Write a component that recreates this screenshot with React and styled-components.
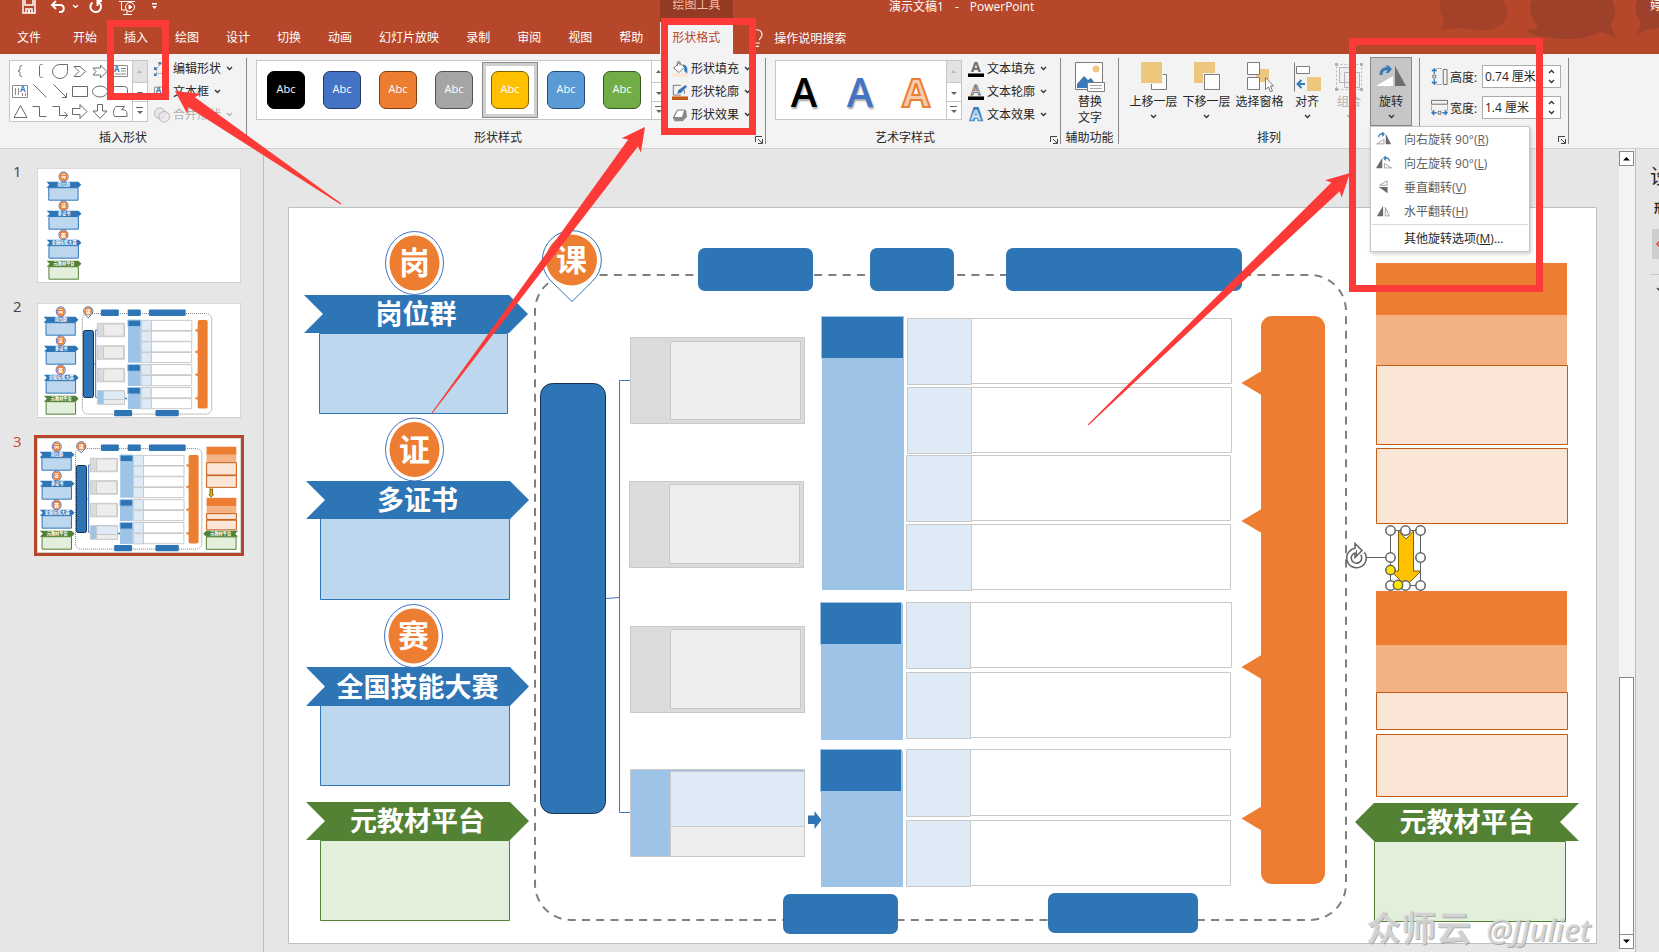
import React from "react";
import styled, { createGlobalStyle, css } from "styled-components";
import { Lightbulb } from "lucide-react";

const c = {
  brand: "#b7472a",
  brandDark: "#943a22",
  panel: "#f3f3f3",
  canvas: "#e6e6e6",
  line: "#c6c6c6",
  rule: "#8a8886",
  text: "#262626",
  muted: "#606060",
  faint: "#b1b1b1",
  icon: "#6a6a6a",
  iconBlue: "#3b7ab8",
  sand: "#eec77f",
  blue: "#2e75b6",
  orange: "#ed7d31",
  green: "#548235",
  mark: "#fc3a37",
};

const Global = createGlobalStyle`
  *, *::before, *::after { box-sizing: border-box; }
  body { margin: 0; background: ${c.canvas}; }
  body, button, input {
    font-family: "Open Sans", "Noto Sans CJK SC", sans-serif;
    font-size: 12px;
    color: ${c.text};
  }
  button { border: 0; padding: 0; background: none; }
  svg { display: block; flex: none; }
`;

const Page = styled.div`
  position: relative;
  display: flex;
  flex-direction: column;
  min-height: 100vh;
  overflow: hidden;
`;

/* ---------- header ---------- */

const Header = styled.header`
  position: relative;
  background: ${c.brand};
  color: #fff;
`;

const Ornament = styled.svg`
  position: absolute;
  top: 0;
  right: 0;
`;

const TitleBar = styled.div`
  position: relative;
  display: flex;
  height: 22px;
  overflow: hidden;
`;

const QuickAccess = styled.div`
  display: flex;
  align-items: flex-start;
  flex: 0 0 660px;
  padding-left: 14px;
`;

const QuickButton = styled.button`
  display: flex;
  justify-content: center;
  width: ${(p) => p.$w}px;
`;

const ContextLabel = styled.div`
  flex: 0 0 73px;
  background: ${c.brandDark};
  color: #f3bda9;
  text-align: center;
  line-height: 10px;
`;

const DocTitle = styled.h1`
  display: flex;
  flex: 1;
  gap: 11px;
  margin: 0 0 0 156px;
  font-size: 12px;
  font-weight: 400;
  line-height: 14px;
  white-space: nowrap;
`;

const UserName = styled.div`
  flex: 0 0 9px;
  overflow: hidden;
  line-height: 12px;
  white-space: nowrap;
`;

const TabRow = styled.nav`
  position: relative;
  display: flex;
  height: 32px;
`;

const Tab = styled.button`
  padding: 0 13px;
  margin-right: 1px;
  color: #fff;
  line-height: 32px;
  white-space: nowrap;
  ${(p) => p.$file && css`padding: 0 18px 0 17px;`}
  ${(p) =>
    p.$active &&
    css`
      margin: 0 0 0 3px;
      padding: 0 13px 0 12px;
      color: ${c.brand};
      background: ${c.panel};
    `}
`;

const TellMe = styled.button`
  display: flex;
  align-items: center;
  gap: 7px;
  margin-left: 14px;
  color: #fff;
`;

/* ---------- ribbon ---------- */

const Ribbon = styled.section`
  display: flex;
  height: 95px;
  background: ${c.panel};
  border-bottom: 1px solid #d0d0d0;
`;

const GroupBox = styled.div`
  display: flex;
  flex-direction: column;
  flex: 0 0 ${(p) => p.$w}px;
`;

const GroupBody = styled.div`
  display: flex;
  flex: 1;
  align-items: flex-start;
  padding: ${(p) => p.$pad || "6px 0 0 9px"};
`;

const GroupFoot = styled.div`
  display: flex;
  align-items: center;
  height: 20px;
`;

const GroupName = styled.span`
  flex: 1;
  text-align: center;
  line-height: 20px;
  white-space: nowrap;
`;

const Launcher = styled.button`
  display: flex;
  justify-content: flex-end;
  width: 16px;
  padding: 4px 1px 0 0;
`;

const Separator = styled.div`
  flex: 0 0 1px;
  margin: 4px 0;
  background: ${c.rule};
`;

const Gallery = styled.div`
  display: flex;
  height: ${(p) => p.$h || 60}px;
  background: #fff;
  border: 1px solid ${c.line};
`;

const ShapeGrid = styled.div`
  display: grid;
  grid-template-columns: repeat(6, 20px);
  grid-auto-rows: 20px;
  width: 122px;
`;

const ShapeButton = styled.button`
  display: grid;
  place-items: center;
`;

const ScrollColumn = styled.div`
  display: grid;
  grid-template-rows: 21px 19px 1fr;
  width: 15px;
  border-left: 1px solid ${c.line};
`;

const ScrollCell = styled.button`
  display: grid;
  place-items: center;
  background: ${(p) => (p.disabled ? "#e3e3e3" : "#fff")};
  & + & { border-top: 1px solid ${c.line}; }
`;

const Commands = styled.div`
  display: grid;
  grid-auto-rows: 23px;
  margin: ${(p) => p.$m || "-3px 0 0 6px"};
`;

const Command = styled.button`
  display: flex;
  align-items: center;
  gap: ${(p) => p.$gap || 5}px;
  line-height: 23px;
  white-space: nowrap;
  color: ${(p) => (p.disabled ? c.faint : c.text)};
`;

const CommandIcon = styled.span`
  width: 14px;
`;

const StyleList = styled.div`
  display: flex;
  align-items: center;
  width: 394px;
  padding-left: 1px;
`;

const StyleTile = styled.button`
  display: grid;
  place-items: center;
  width: 56px;
  height: 56px;
  ${(p) =>
    p.$selected &&
    css`
      border: 1px solid #8a8a8a;
      box-shadow: inset 0 0 0 3px #cfcfcf;
    `}
`;

const StyleChip = styled.span`
  width: 38px;
  height: 38px;
  border: 1px solid ${(p) => p.$edge};
  border-radius: 7px;
  background: ${(p) => p.$fill};
  color: #fff;
  font-size: 11px;
  line-height: 33px;
`;

const WordArtList = styled.div`
  display: flex;
  width: 170px;
`;

const WordArt = styled.button`
  width: 56px;
  font-size: 40px;
  font-weight: 600;
  line-height: 62px;
  color: ${(p) => p.$fill};
  text-shadow: 1px 2px 2px rgba(0, 0, 0, 0.35);
  ${(p) =>
    p.$outline &&
    css`
      font-weight: 700;
      -webkit-text-stroke: 2px ${p.$outline};
      text-shadow: none;
    `}
`;

const BigButton = styled.button`
  display: flex;
  flex-direction: column;
  align-items: center;
  width: ${(p) => p.$w}px;
  height: 69px;
  padding-top: 4px;
  border: 1px solid transparent;
  line-height: 16px;
  white-space: pre-line;
  color: ${(p) => (p.disabled ? c.faint : c.text)};
  ${(p) =>
    p.$open &&
    css`
      background: #c6c6c6;
      border-color: #8a8a8a;
    `}
`;

const BigName = styled.span`
  margin: 2px -4px 4px;
`;

const MenuAnchor = styled.div`
  position: relative;
`;

const Menu = styled.div`
  position: absolute;
  z-index: 3;
  top: 69px;
  left: 0;
  width: 160px;
  padding: 0 1px 1px;
  background: #fff;
  border: 1px solid ${c.line};
  box-shadow: 1px 2px 4px rgba(0, 0, 0, 0.2);
`;

const MenuItem = styled.button`
  display: grid;
  grid-template-columns: 28px 1fr;
  align-items: center;
  width: 100%;
  height: 24px;
  padding-left: 4px;
  text-align: left;
  white-space: nowrap;
  color: ${(p) => (p.$strong ? c.text : c.muted)};
`;

const MenuRule = styled.hr`
  height: 1px;
  margin: 1px 0;
  border: 0;
  background: #d9d9d9;
`;

const SizeRows = styled.div`
  display: grid;
  gap: 8px;
`;

const SizeRow = styled.div`
  display: flex;
  align-items: center;
  height: 23px;
`;

const SizeLabel = styled.label`
  width: 32px;
  margin-left: 2px;
  white-space: nowrap;
`;

const Spinner = styled.div`
  display: flex;
  width: 79px;
  height: 23px;
  background: #fff;
  border: 1px solid #ababab;
`;

const SpinInput = styled.input`
  width: 60px;
  padding: 0 2px 2px;
  border: 0;
  outline: 0;
  background: none;
`;

const SpinButtons = styled.div`
  display: grid;
  flex: 1;
`;

const SpinButton = styled.button`
  display: grid;
  place-items: center;
`;

/* ---------- workspace ---------- */

const Workspace = styled.main`
  display: flex;
  flex: 1;
  background: ${c.canvas};
`;

const SlidePane = styled.aside`
  display: flex;
  flex-direction: column;
  gap: 13px;
  flex: 0 0 264px;
  padding: 12px 22px 0 13px;
  border-right: 1px solid #bdbdbd;
`;

const ThumbRow = styled.button`
  display: flex;
  align-items: flex-start;
  text-align: left;
`;

const ThumbNumber = styled.span`
  flex: 0 0 24px;
  font-size: 15px;
  line-height: 20px;
  color: ${(p) => (p.$on ? "#c8472b" : "#444")};
`;

const ThumbFrame = styled.span`
  flex: 1;
  margin-top: 7px;
  outline: ${(p) => (p.$on ? `3px solid ${c.brand}` : "0")};
`;

const Editor = styled.section`
  flex: 1;
  min-width: 0;
  padding: 58px 22px 8px 24px;
`;

const SlideSvg = styled.svg`
  width: 100%;
  height: auto;
  font-family: "Noto Sans CJK SC", sans-serif;
  font-weight: 700;
`;

const ScrollBar = styled.div`
  display: flex;
  flex-direction: column;
  flex: 0 0 16px;
  padding: 2px 1px 3px 0;
  background: ${c.panel};
`;

const ScrollArrow = styled.button`
  display: grid;
  place-items: center;
  flex: 0 0 15px;
  background: #fff;
  border: 1px solid #8a8a8a;
`;

const ScrollTrack = styled.div`
  flex: 2;
`;

const ScrollThumb = styled.div`
  flex: 1;
  background: #fff;
  border: 1px solid #8a8a8a;
  border-bottom: 0;
`;

const FormatPane = styled.aside`
  flex: 0 0 24px;
  padding: 10px 0 0 14px;
  border-left: 1px solid #bdbdbd;
  overflow: hidden;
  white-space: nowrap;
`;

const PaneTitle = styled.h2`
  margin: 0;
  font-size: 20px;
  font-weight: 400;
  line-height: 36px;
`;

const PaneTab = styled.div`
  padding-left: 4px;
  font-weight: 700;
  line-height: 28px;
`;

const PaneTool = styled.button`
  display: flex;
  align-items: center;
  width: 30px;
  height: 30px;
  margin: 6px 0 15px 2px;
  padding-left: 3px;
  background: #cdcdcd;
`;

const PaneSection = styled.div`
  width: 40px;
  padding: 12px 0 0 6px;
  border-top: 1px solid ${c.line};
`;

const Overlay = styled.svg`
  position: absolute;
  z-index: 5;
  top: 0;
  left: 0;
  width: 100%;
  height: auto;
  pointer-events: none;
`;

/* ---------- small drawings ---------- */

const Chevron = ({ up, color = "#333" }) => (
  <svg width="7" height="5" fill="none" stroke={color} strokeWidth="1.3">
    <path d={up ? "M1 4l2.500-2.500L6 4" : "M1 1l2.500 2.500L6 1"} />
  </svg>
);

const Triangle = ({ up, color = "#555", bar }) => (
  <svg width="8" height="9" fill={color}>
    {bar && <path d="M0 0h7v1H0z" />}
    <path d={up ? "M1 6h5L3.500 3z" : "M1 4h6L4 7z"} />
  </svg>
);

const LauncherIcon = () => (
  <svg width="10" height="10" fill="none" stroke="#444" strokeWidth="1">
    <path d="M1.500 7V1.500H8M4 4l4 4M8.500 4v4.500H4" />
  </svg>
);

const Line16 = ({ children, size = 18, ...rest }) => (
  <svg width={size} height={size} viewBox="0 0 18 18" fill="none" stroke={c.icon} strokeWidth="1" {...rest}>
    {children}
  </svg>
);

const LetterA = ({ x, y, size = 9, fill = c.iconBlue }) => (
  <text x={x} y={y} fontSize={size} fontWeight="700" fill={fill} stroke="none">A</text>
);

const shapeIcons = [
  ["左大括号", <path d="M11 3.500c-2.500 0-2 1.500-2 3S8.500 9 7 9c1.500 0 2 1 2 2.500s-.5 3 2 3" />],
  ["左中括号", <path d="M11.500 2.500c-3 0-3 1-3 2v9c0 1 0 2 3 2" />],
  ["泪滴形", <path d="M16.500 2.500v7a7.500 7 0 1 1-7.500-7z" />],
  ["燕尾形", <path d="M3 4.500h6L14.500 9.500 9 14.500H3l5-5z" />],
  ["虚尾箭头", <path d="M2 6h7.500V3L16 9.500 9.500 16v-3H2l3-3.500z" />],
  ["文本框", <><path d="M1.500 3.500h15v11h-15zM10 6.500h5M10 9h5M4 12h11" stroke="#8a8a8a" /><LetterA x="3" y="10" size="8" /></>],
  ["竖排文本框", <><path d="M1.500 3.500h15v12h-15zM4.500 6v7M7.500 6v7M11.500 11v3M14.500 11v3" stroke="#8a8a8a" /><LetterA x="9" y="10" size="8" /></>],
  ["直线", <path d="M2.500 2.500l13 13" />],
  ["箭头", <path d="M2.500 2.500l13 13M15.500 11v4.500H11" />],
  ["矩形", <path d="M1.500 4.500h15v10h-15z" />],
  ["椭圆", <ellipse cx="9" cy="9.500" rx="7.500" ry="5.500" />],
  ["圆角矩形", <rect x="1.500" y="4.500" width="15" height="10" rx="3" />],
  ["三角形", <path d="M9.500 3.500l6.500 12H3z" />],
  ["肘形连接符", <path d="M1.500 4.500h7v10h7" />],
  ["肘形箭头", <path d="M1.500 4.500h7v9h8M13.500 10l3 3.500-3 3" />],
  ["右箭头", <path d="M1.500 6.500H9v-4l7 7-7 7v-4H1.500z" />],
  ["下箭头", <path d="M6.500 2.500h5V9h4.500L9 16.500 2 9h4.500z" />],
  ["任意多边形", <path d="M5 4.500h8.500l-3 3.500c4-1 6 1 5.500 6.500H3.500c-2-4-1-7 1.500-10z" />],
];

const ShapeGallery = () => (
  <Gallery $h={62}>
    <ShapeGrid>
      {shapeIcons.map(([name, art]) => (
        <ShapeButton key={name} aria-label={name}><Line16>{art}</Line16></ShapeButton>
      ))}
    </ShapeGrid>
    <GalleryScroll top />
  </Gallery>
);

const GalleryScroll = ({ top }) => (
  <ScrollColumn>
    <ScrollCell disabled={top} aria-label="向上"><Triangle up color={top ? "#b8b8b8" : "#666"} /></ScrollCell>
    <ScrollCell aria-label="向下"><Triangle color="#666" /></ScrollCell>
    <ScrollCell aria-label="更多"><Triangle bar color="#666" /></ScrollCell>
  </ScrollColumn>
);

const EditShapeIcon = () => (
  <Line16 size={16}>
    <path d="M3 14V9l4-6h4l1 11z" stroke="#8a8a8a" strokeDasharray="2 1" />
    <path d="M5 1h3v3H5zM0 7h3v3H0zM0 14h3v3H0zM12 5h3v3h-3z" fill={c.iconBlue} stroke="none" />
  </Line16>
);
const TextBoxIcon = () => (
  <Line16 size={16}>
    <path d="M.5 3.500h16v11H.5zM10 6.500h5M10 9h5M3 12h12" stroke="#8a8a8a" />
    <LetterA x="2" y="10" />
  </Line16>
);
const MergeIcon = () => (
  <Line16 size={16} stroke="#b5b0b5">
    <circle cx="6.500" cy="7" r="6" fill="#ebe6ec" />
    <circle cx="11.500" cy="11" r="6" fill="#ebe6ec" fillOpacity="0.6" />
  </Line16>
);
const FillIcon = () => (
  <Line16 size={16}>
    <path d="M0 14h18v4H0z" fill="#fbe5d6" stroke="none" />
    <path d="M8 2l6 5-6 6-6-5zM6 6V1h3v4" fill="#fff" />
    <path d="M12 4c5 0 6 5 5 10-3-1-4-4-3-6z" fill={c.iconBlue} stroke="none" />
  </Line16>
);
const OutlineIcon = () => (
  <Line16 size={16}>
    <path d="M0 14h18v4H0z" fill="#c55a11" stroke="none" />
    <path d="M10 1.500H1.500v11H10M14 7v4" />
    <path d="M6 11l1-4 8-6 2 2-7 7z" fill={c.iconBlue} stroke="none" />
  </Line16>
);
const EffectIcon = () => (
  <Line16 size={16}>
    <path d="M6 4h10l1 7-5 5H3l-2-4z" fill="#8b8b8b" stroke="none" />
    <path d="M6 3.500h8.500l-3 8.500H2z" fill="#fff" />
  </Line16>
);
const TextFillIcon = () => (
  <Line16 size={16}>
    <path d="M0 14h18v4H0z" fill="#000" stroke="none" />
    <LetterA x="3.500" y="12" size="16" fill={c.icon} />
  </Line16>
);
const TextOutlineIcon = () => (
  <Line16 size={16}>
    <path d="M0 14h18v4H0z" fill="#000" stroke="none" />
    <text x="3.500" y="12" fontSize="16" fontWeight="600" fill="#fff">A</text>
  </Line16>
);
const TextEffectIcon = () => (
  <Line16 size={16}>
    <text x="3" y="15" fontSize="17" fontWeight="700" fill={c.iconBlue} stroke={c.iconBlue} strokeWidth="3">A</text>
    <text x="3" y="15" fontSize="17" fontWeight="600" fill="#fff" stroke="#9cc3ea">A</text>
  </Line16>
);

const Art30 = ({ children }) => (
  <svg width="30" height="30" fill="none" stroke="#7a7a7a" strokeWidth="1">{children}</svg>
);
const AltTextIcon = () => (
  <Art30>
    <path d="M.5.500h27v27H.5z" fill="#fff" />
    <circle cx="21" cy="7" r="3.500" fill={c.sand} stroke="none" />
    <path d="M2 26v-4l7-8 4 4 3-2 3 4v6z" fill={c.iconBlue} stroke="none" />
    <path d="M12.500 20.500h17v9h-17z" fill="#fff" />
    <path d="M15 23.500h12M15 26.500h12" stroke="#aaa" />
  </Art30>
);
const ForwardIcon = () => (
  <Art30>
    <path d="M12.500 12.500h15v15h-15z" fill="#fff" />
    <path d="M1 0h23v22H1z" fill={c.panel} stroke="none" />
    <path d="M2 0h21v21H2z" fill={c.sand} stroke="none" />
  </Art30>
);
const BackwardIcon = () => (
  <Art30>
    <path d="M2 0h21v21H2z" fill={c.sand} stroke="none" />
    <path d="M11 11h18v18H11z" fill={c.panel} stroke="none" />
    <path d="M12.500 12.500h15v15h-15z" fill="#fff" />
  </Art30>
);
const SelectionIcon = () => (
  <Art30>
    <path d="M11 7h13v13H11z" fill={c.sand} stroke="none" />
    <path d="M2.500.500h12v12h-12zM2.500 15.500h12v12h-12z" fill="#fff" />
    <path d="M20.500 15.500v12l3-2.500 2 5 2-1-2-5h3z" fill="#fff" />
  </Art30>
);
const AlignIcon = () => (
  <Art30>
    <path d="M2.500.500v29" />
    <path d="M4.500 4.500h13v7h-13z" fill="#fff" />
    <path d="M15 15h14v14H15z" fill={c.sand} stroke="none" />
    <path d="M13 22H6M9.500 18L5.500 22l4 4" stroke={c.iconBlue} strokeWidth="2" />
  </Art30>
);
const GroupIcon = () => (
  <Art30>
    <path d="M2.500 2.500h25v25h-25z" stroke="#b8b3b8" strokeDasharray="2 2" />
    <path d="M5.500 5.500h15v15h-15zM10.500 10.500h15v15h-15z" stroke="#b8b3b8" fill="#ebe6ec" fillOpacity="0.4" />
    <path d="M1 1h3v3H1zM26 1h3v3h-3zM1 26h3v3H1zM26 26h3v3h-3z" fill="#b0b0b0" stroke="none" />
  </Art30>
);
const RotateIcon = () => (
  <Art30>
    <path d="M0 24l17-10v10z" fill="#fff" stroke="none" />
    <path d="M19 4l11 20H19z" fill="#6f6f6f" stroke="none" />
    <path d="M5 13c0-5 3-7 8-6" stroke={c.iconBlue} strokeWidth="3" />
    <path d="M9.500 3.500h3l3.500 3.500-3.500 4h-3l3-4z" fill={c.iconBlue} stroke="none" />
  </Art30>
);

const menuArt = {
  right: (
    <>
      <path d="M1 14.500l8-5v5z" stroke="#999" />
      <path d="M11 3l6 12h-6z" fill={c.icon} stroke="none" />
      <path d="M3 7c0-3 2-4 5-3.500M7 1.500l2 2-2 2.500" stroke={c.iconBlue} strokeWidth="1.500" />
    </>
  ),
  left: (
    <>
      <path d="M7 3v12H0z" fill={c.icon} stroke="none" />
      <path d="M9.500 9.500v5h8z" stroke="#999" />
      <path d="M15 7c0-3-2-4-5-3.500M11 1.500l-2 2 2 2.500" stroke={c.iconBlue} strokeWidth="1.500" />
    </>
  ),
  vertical: (
    <>
      <path d="M12.500 2v5H4z" stroke="#999" />
      <path d="M13 9v7L3 9z" fill={c.icon} stroke="none" />
    </>
  ),
  horizontal: (
    <>
      <path d="M8 3v12H1z" fill={c.icon} stroke="none" />
      <path d="M10.500 5v9.500H15z" stroke="#999" />
    </>
  ),
};

const HeightIcon = () => (
  <Line16 size={17}>
    <path d="M13 1.500h4v16h-4z" />
    <path d="M6 .5h6M6 17.500h6" strokeDasharray="1 1" />
    <path d="M2 7.500h3v3H2z" />
    <path d="M3.500 1v5M1 3.500L3.500 1 6 3.500M3.500 17v-5M1 14.500L3.500 17 6 14.500" stroke={c.iconBlue} strokeWidth="1.500" />
  </Line16>
);
const WidthIcon = () => (
  <Line16 size={17}>
    <path d="M.5 1.500h17v4H.5z" />
    <path d="M.5 7v6M17.500 7v6" strokeDasharray="1 1" />
    <path d="M7.500 13h3v3h-3z" />
    <path d="M1 14.500h5M3.500 12L1 14.500 3.500 17M17 14.500h-5M14.500 12l2.500 2.500-2.500 2.500" stroke={c.iconBlue} strokeWidth="1.500" />
  </Line16>
);

/* ---------- slide drawing ---------- */

const Box = ({ x, y, r, b, fill, stroke = "none", rx = 0, sw = 1 }) => {
  const inset = stroke === "none" ? 0 : 0.5;
  return (
    <rect
      x={x + inset} y={y + inset} width={r - x - inset * 2} height={b - y - inset * 2}
      rx={rx} fill={fill} stroke={stroke} strokeWidth={sw} vectorEffect="non-scaling-stroke"
    />
  );
};

const SlideText = ({ x, y, size, children }) => (
  <text x={x} y={y} fontSize={size} fill="#fff" textAnchor="middle">{children}</text>
);

const Badge = ({ x, y, children }) => (
  <g>
    <ellipse cx={x} cy={y} rx="29" ry="31.500" fill="#fff" stroke="#4472c4" vectorEffect="non-scaling-stroke" />
    <ellipse cx={x} cy={y} rx="25" ry="27.500" fill={c.orange} />
    <SlideText x={x} y={y + 11} size={31}>{children}</SlideText>
  </g>
);

const Banner = ({ x, y, r, b, color, flip, children }) => {
  const m = (y + b) / 2;
  const d = flip
    ? `M${r} ${y}H${x + 19}L${x} ${m}L${x + 19} ${b}H${r}L${r - 19} ${m}z`
    : `M${x} ${y}H${r - 19}L${r} ${m}L${r - 19} ${b}H${x}L${x + 19} ${m}z`;
  return (
    <g>
      <path d={d} fill={color} />
      <SlideText x={(x + r) / 2} y={m + 10} size={27}>{children}</SlideText>
    </g>
  );
};

const grey = "#c9c9c9";
const tableRows = [
  [907, 972, 1232, 318, 385],
  [907, 972, 1232, 387, 454],
  [906, 972, 1231, 455, 522],
  [906, 972, 1231, 524, 591],
  [906, 971, 1232, 602, 669],
  [906, 971, 1231, 672, 739],
  [906, 971, 1231, 749, 817],
  [906, 971, 1231, 820, 887],
];

const LeftColumn = () => (
  <g>
    <Box x={319} y={333} r={508} b={414} fill="#bdd7ee" stroke={c.blue} />
    <Banner x={304} y={295} r={528} b={333} color={c.blue}>岗位群</Banner>
    <Badge x={414.5} y={263}>岗</Badge>
    <Box x={320} y={518} r={510} b={600} fill="#bdd7ee" stroke={c.blue} />
    <Banner x={306} y={481} r={529} b={519} color={c.blue}>多证书</Banner>
    <Badge x={414.5} y={449.5}>证</Badge>
    <Box x={320} y={705} r={510} b={786} fill="#bdd7ee" stroke={c.blue} />
    <Banner x={306} y={667} r={529} b={706} color={c.blue}>全国技能大赛</Banner>
    <Badge x={413.5} y={636}>赛</Badge>
    <Box x={320} y={840} r={510} b={921} fill="#e2efda" stroke={c.green} />
    <Banner x={306} y={802} r={529} b={840} color={c.green}>元教材平台</Banner>
  </g>
);

const Centre = ({ small, wide }) => {
  const shift = (n) => (wide ? `translate(${n} 0)` : undefined);
  return (
    <g>
      <rect
        x={wide ? 579 : 535} y="275" width={wide ? 830 : 811} height="645" rx="36"
        fill="none" stroke="#7f7f7f" strokeWidth={small ? 1 : 2}
        strokeDasharray={small ? "1 1" : "8 6.300"} vectorEffect="non-scaling-stroke"
      />
      <Box x={698} y={248} r={813} b={291} rx={7} fill={c.blue} />
      <Box x={870} y={248} r={954} b={291} rx={7} fill={c.blue} />
      <Box x={1006} y={248} r={1242} b={291} rx={7} fill={c.blue} />
      <Box x={783} y={894} r={898} b={934} rx={7} fill={c.blue} />
      <Box x={1048} y={893} r={1198} b={933} rx={7} fill={c.blue} />
      <g transform={shift(45)}>
        <path
          d="M551 281a29.500 29.500 0 1 1 41.700 0L572 301.500z"
          fill="#fff" stroke={c.blue} vectorEffect="non-scaling-stroke"
        />
        <circle cx="571.500" cy="260" r="25.500" fill={c.orange} />
        <SlideText x={571.5} y={271} size={31}>课</SlideText>
        <Box x={540} y={383} r={606} b={814} rx={12} fill={c.blue} stroke="#172f51" />
        <path
          d="M630 380.500h-10.500V812.500H630M606 598.500l13.500-1"
          fill="none" stroke="#4472c4" vectorEffect="non-scaling-stroke"
        />
        <Box x={630} y={337} r={805} b={424} fill="#dbdbdb" stroke={grey} />
        <Box x={670} y={341} r={801} b={420} fill="#ededed" stroke={grey} />
        <Box x={629} y={481} r={804} b={568} fill="#dbdbdb" stroke={grey} />
        <Box x={669} y={484} r={800} b={564} fill="#ededed" stroke={grey} />
        <Box x={630} y={626} r={805} b={713} fill="#dbdbdb" stroke={grey} />
        <Box x={670} y={629} r={801} b={709} fill="#ededed" stroke={grey} />
        <Box x={630} y={769} r={805} b={857} fill="#9dc3e6" stroke={grey} />
        <Box x={670} y={826} r={805} b={857} fill="#ededed" stroke={grey} />
        <Box x={670} y={771} r={805} b={827} fill="#deebf7" stroke={grey} />
        <path d="M808 815.500h6.500V811l7 9-7 9v-5H808z" fill={c.blue} />
      </g>
      <g transform={shift(50)}>
        <Box x={822} y={317} r={904} b={590} fill="#9dc3e6" />
        <Box x={821} y={316} r={904} b={359} fill={c.blue} stroke="#9dc3e6" />
        <Box x={821} y={604} r={903} b={740} fill="#9dc3e6" />
        <Box x={820} y={602} r={902} b={645} fill={c.blue} stroke="#9dc3e6" />
        <Box x={821} y={751} r={903} b={887} fill="#9dc3e6" />
        <Box x={820} y={749} r={902} b={792} fill={c.blue} stroke="#9dc3e6" />
        {tableRows.map(([x, mid, r, y, b]) => (
          <g key={y}>
            <Box x={mid - 1} y={y} r={r} b={b - 1} fill="#fff" stroke={grey} />
            <Box x={x} y={y} r={mid} b={b} fill="#deebf7" stroke={grey} />
          </g>
        ))}
      </g>
      <g transform={shift(58)} fill={c.orange}>
        <Box x={1261} y={316} r={1325} b={884} rx={11} fill={c.orange} />
        {[383, 521, 667, 818.5].map((y) => (
          <path key={y} d={`M1241.500 ${y}l20-12v24z`} />
        ))}
      </g>
    </g>
  );
};

const RightColumn = () => (
  <g>
    <Box x={1376} y={263} r={1567} b={315} fill={c.orange} />
    <Box x={1376} y={315} r={1567} b={366} fill="#f4b183" />
    <Box x={1376} y={365} r={1568} b={445} fill="#fbe5d6" stroke="#c55a11" />
    <Box x={1376} y={448} r={1568} b={524} fill="#fbe5d6" stroke="#c55a11" />
    <Box x={1376} y={591} r={1567} b={645} fill={c.orange} />
    <Box x={1376} y={645} r={1567} b={693} fill="#f4b183" />
    <Box x={1376} y={692} r={1568} b={730} fill="#fbe5d6" stroke="#c55a11" />
    <Box x={1376} y={734} r={1568} b={797} fill="#fbe5d6" stroke="#c55a11" />
    <Box x={1374} y={841} r={1566} b={922} fill="#e2efda" stroke={c.green} />
    <Banner x={1355} y={803} r={1579} b={841} color={c.green} flip>元教材平台</Banner>
    <path
      d="M1398.500 531l7.500 8 7.500-8v40h7.500l-15 15-15-15h7.500z"
      fill="#ffc000" stroke="#7f6000" vectorEffect="non-scaling-stroke"
    />
  </g>
);

const handles = [
  [1390.5, 530.5], [1405.5, 530.5], [1420.5, 530.5],
  [1390.5, 557.5], [1420.5, 557.5],
  [1390.5, 585.5], [1405.5, 585.5], [1420.5, 585.5],
];

const Selection = () => (
  <g fill="#fff" stroke="#606060">
    <path d="M1390.500 530.500h30v55h-30zM1366 557.500h20" fill="none" />
    {handles.map(([x, y]) => <circle key={`${x}-${y}`} cx={x} cy={y} r="4.700" strokeWidth="1.500" />)}
    <circle cx="1390.500" cy="570" r="4.700" fill="#ffe600" strokeWidth="1.500" />
    <circle cx="1398" cy="585" r="4.700" fill="#ffe600" strokeWidth="1.500" />
    <g fill="none">
      <path d="M1362.500 553.500a7.500 7.500 0 1 1-6-3" strokeWidth="6" />
      <path d="M1355 543.500l7 7-7 7z" fill="#fff" strokeWidth="1.500" />
      <path d="M1362.500 553.500a7.500 7.500 0 1 1-6-3" stroke="#fff" strokeWidth="3" />
      <path d="M1356.500 557v-7" strokeWidth="1" />
    </g>
  </g>
);

const Slide = ({ page, small }) => {
  const columnShift = { 1: 44, 2: 26, 3: 0 }[page];
  return (
    <SlideSvg viewBox="288 207 1309 737" role="img" aria-label={`幻灯片 ${page}`}>
      <Box x={288} y={207} r={1597} b={944} fill="#fff" stroke="#bfbfbf" />
      <g transform={`translate(${columnShift} 0)`}><LeftColumn /></g>
      {page > 1 && <Centre small={small} wide={page === 2} />}
      {page > 2 && <RightColumn />}
      {!small && <Selection />}
    </SlideSvg>
  );
};

/* ---------- annotations ---------- */

const MarkArrow = ({ tip, tail }) => {
  const dx = tip[0] - tail[0];
  const dy = tip[1] - tail[1];
  const len = Math.hypot(dx, dy);
  const at = (back, side) => {
    const px = tip[0] - (dx / len) * back - (dy / len) * side;
    const py = tip[1] - (dy / len) * back + (dx / len) * side;
    return `${px.toFixed(1)},${py.toFixed(1)}`;
  };
  const points = [at(0, 0), at(23, 12), at(20, 6), at(len, 0.5), at(len, -0.5), at(20, -6), at(23, -12)];
  return <polygon points={points.join(" ")} fill={c.mark} />;
};

const Annotations = () => (
  <Overlay viewBox="0 0 1659 952" aria-hidden="true">
    <g fill="none" stroke={c.mark} strokeWidth="7">
      <rect x="110.500" y="23.500" width="55" height="73" />
      <rect x="664.500" y="21.500" width="88" height="110" />
      <rect x="1352.500" y="41.500" width="187" height="247" />
    </g>
    <MarkArrow tip={[175, 91]} tail={[341, 204]} />
    <MarkArrow tip={[645, 127]} tail={[432, 413]} />
    <MarkArrow tip={[1350, 173]} tail={[1088, 425]} />
    <g fontFamily='"Noto Sans CJK SC", sans-serif'>
      {[["#9a9a9a", 1], ["#dcdcdc", 0]].map(([fill, d]) => (
        <g key={fill} fill={fill} fillOpacity="0.8">
          <text x={1366 + d} y={941 + d} fontSize="35" fontWeight="700">众师云</text>
          <text x={1486 + d} y={941 + d} fontSize="30" fontWeight="600" fontStyle="italic" fontFamily='"Open Sans", sans-serif'>@JJuliet</text>
        </g>
      ))}
    </g>
  </Overlay>
);

/* ---------- composition ---------- */

const Group = ({ w, name, launcher, pad, children }) => (
  <>
    <GroupBox $w={w}>
      <GroupBody $pad={pad}>{children}</GroupBody>
      <GroupFoot>
        <GroupName>{name}</GroupName>
        {launcher && <Launcher aria-label={launcher}><LauncherIcon /></Launcher>}
      </GroupFoot>
    </GroupBox>
    <Separator />
  </>
);

const CommandButton = ({ icon, name, disabled, gap }) => (
  <Command disabled={disabled} $gap={gap}>
    <CommandIcon>{icon}</CommandIcon>
    <span>{name}</span>
    <Chevron color={disabled ? c.faint : undefined} />
  </Command>
);

const LargeButton = ({ icon, name, w, menu, ...rest }) => (
  <BigButton $w={w} {...rest}>
    {icon}
    <BigName>{name}</BigName>
    {menu && <Chevron color={rest.disabled ? c.faint : undefined} />}
  </BigButton>
);

const tabs = ["开始", "插入", "绘图", "设计", "切换", "动画", "幻灯片放映", "录制", "审阅", "视图", "帮助"];

const styleTiles = [
  ["#000000", "#000000"],
  ["#4472c4", "#1f3864"],
  ["#ed7d31", "#843c0c"],
  ["#a5a5a5", "#525252"],
  ["#ffc000", "#7f6000"],
  ["#5b9bd5", "#1f4e79"],
  ["#70ad47", "#385723"],
];

const rotateItems = [
  ["right", "向右旋转 90°", "R"],
  ["left", "向左旋转 90°", "L"],
  ["vertical", "垂直翻转", "V"],
  ["horizontal", "水平翻转", "H"],
];

const SizeField = ({ id, icon, label, value }) => (
  <SizeRow>
    {icon}
    <SizeLabel htmlFor={id}>{label}</SizeLabel>
    <Spinner>
      <SpinInput id={id} defaultValue={value} />
      <SpinButtons>
        <SpinButton aria-label={`增加${label}`}><Chevron up /></SpinButton>
        <SpinButton aria-label={`减少${label}`}><Chevron /></SpinButton>
      </SpinButtons>
    </Spinner>
  </SizeRow>
);

const AppHeader = () => (
  <Header>
    <Ornament width="230" height="54" fill="#96402a" aria-hidden="true">
      <path d="M12 0h62c8 10 4 24-8 28-6 4-20 2-34 0L11 30c4-4 4-8 3-12-3-6-4-12-2-18z" opacity="0.6" />
      <path d="M103 0h80c5 8 4 18-1 24l4 14c-6-4-10-6-16-6-14 8-40 10-68 2l-4-5c6 1 10 0 11-3-8-8-10-18-6-26z" opacity="0.8" />
      <path d="M208 0h22v28c-8 2-14 2-22 6l4-12c-6-6-7-14-4-22z" opacity="0.8" />
    </Ornament>
    <TitleBar>
      <QuickAccess>
        <QuickButton $w={30} aria-label="保存">
          <svg width="14" height="14" fill="none" stroke="#fff" strokeWidth="1.500">
            <path d="M1 0v13h12V0M3 0v5h8V0M4 13V9h6v4" />
            <path d="M6 10h2v3H6z" fill="#fff" stroke="none" />
          </svg>
        </QuickButton>
        <QuickButton $w={27} aria-label="撤消">
          <svg width="16" height="14" fill="none" stroke="#fff" strokeWidth="2">
            <path d="M2 5h8c5 0 5 7 0 7H9M6 1L2 5l4 4" />
          </svg>
        </QuickButton>
        <QuickButton $w={8} aria-label="撤消列表">
          <svg width="7" height="8" fill="none" stroke="#fff" strokeWidth="1.300"><path d="M1 5l2.500 2.500L6 5" /></svg>
        </QuickButton>
        <QuickButton $w={34} aria-label="重复">
          <svg width="14" height="14" fill="none" stroke="#fff" strokeWidth="2">
            <path d="M3.500 2.500A5.300 5.300 0 1 0 9.500 2.200M13 1H8.500v5" />
          </svg>
        </QuickButton>
        <QuickButton $w={28} aria-label="从头开始">
          <svg width="17" height="15" fill="none" stroke="#fff">
            <path d="M0 1.500h16M2.500 2v8H8M8 11v3M4 14.500h9" />
            <circle cx="11" cy="7" r="4.500" />
            <path d="M10 5l3 2-3 2z" fill="#fff" />
          </svg>
        </QuickButton>
        <QuickButton $w={27} aria-label="自定义">
          <svg width="6" height="10" fill="#fff"><path d="M0 3h5v1.500H0zM0 6h5L2.500 9z" /></svg>
        </QuickButton>
      </QuickAccess>
      <ContextLabel>绘图工具</ContextLabel>
      <DocTitle><span>演示文稿1</span><span>-</span><span>PowerPoint</span></DocTitle>
      <UserName>婷</UserName>
    </TitleBar>
    <TabRow>
      <Tab $file>文件</Tab>
      {tabs.map((t) => <Tab key={t}>{t}</Tab>)}
      <Tab $active>形状格式</Tab>
      <TellMe><Lightbulb size={20} strokeWidth={1.3} />操作说明搜索</TellMe>
    </TabRow>
  </Header>
);

const AppRibbon = () => (
  <Ribbon>
    <Group w={246} name="插入形状">
      <ShapeGallery />
      <Commands>
        <CommandButton icon={<EditShapeIcon />} name="编辑形状" />
        <CommandButton icon={<TextBoxIcon />} name="文本框" />
        <CommandButton icon={<MergeIcon />} name="合并形状" disabled />
      </Commands>
    </Group>
    <Group w={518} name="形状样式" launcher="设置形状格式">
      <Gallery>
        <StyleList>
          {styleTiles.map(([fill, edge], i) => (
            <StyleTile key={fill} $selected={i === 4}>
              <StyleChip $fill={fill} $edge={edge}>Abc</StyleChip>
            </StyleTile>
          ))}
        </StyleList>
        <GalleryScroll />
      </Gallery>
      <Commands $m="-3px 0 0 5px">
        <CommandButton icon={<FillIcon />} name="形状填充" />
        <CommandButton icon={<OutlineIcon />} name="形状轮廓" />
        <CommandButton icon={<EffectIcon />} name="形状效果" />
      </Commands>
    </Group>
    <Group w={294} name="艺术字样式" launcher="设置文本格式">
      <Gallery>
        <WordArtList>
          <WordArt $fill="#000">A</WordArt>
          <WordArt $fill="#4472c4">A</WordArt>
          <WordArt $fill="#f8cbad" $outline={c.orange}>A</WordArt>
        </WordArtList>
        <GalleryScroll top />
      </Gallery>
      <Commands>
        <CommandButton icon={<TextFillIcon />} name="文本填充" />
        <CommandButton icon={<TextOutlineIcon />} name="文本轮廓" />
        <CommandButton icon={<TextEffectIcon />} name="文本效果" />
      </Commands>
    </Group>
    <Group w={57} name="辅助功能" pad="3px 0 0 5px">
      <LargeButton w={48} icon={<AltTextIcon />} name={"替换\n文字"} />
    </Group>
    <Group w={300} name="排列" pad="3px 0 0 8px">
      <LargeButton w={53} icon={<ForwardIcon />} name="上移一层" menu />
      <LargeButton w={53} icon={<BackwardIcon />} name="下移一层" menu />
      <LargeButton w={53} icon={<SelectionIcon />} name="选择窗格" />
      <LargeButton w={42} icon={<AlignIcon />} name="对齐" menu />
      <LargeButton w={42} icon={<GroupIcon />} name="组合" menu disabled />
      <MenuAnchor>
        <LargeButton w={42} icon={<RotateIcon />} name="旋转" menu $open />
        <Menu role="menu">
          {rotateItems.map(([key, name, letter]) => (
            <MenuItem key={key} role="menuitem">
              <Line16 size={16}>{menuArt[key]}</Line16>
              <span>{name}(<u>{letter}</u>)</span>
            </MenuItem>
          ))}
          <MenuRule />
          <MenuItem role="menuitem" $strong>
            <span />
            <span>其他旋转选项(<u>M</u>)...</span>
          </MenuItem>
        </Menu>
      </MenuAnchor>
    </Group>
    <Group w={148} launcher="大小和位置" pad="11px 0 0 11px">
      <SizeRows>
        <SizeField id="shape-height" icon={<HeightIcon />} label="高度:" value="0.74 厘米" />
        <SizeField id="shape-width" icon={<WidthIcon />} label="宽度:" value="1.4 厘米" />
      </SizeRows>
    </Group>
  </Ribbon>
);

export default function App() {
  return (
    <Page>
      <Global />
      <AppHeader />
      <AppRibbon />
      <Workspace>
        <SlidePane>
          {[1, 2, 3].map((n) => (
            <ThumbRow key={n}>
              <ThumbNumber $on={n === 3}>{n}</ThumbNumber>
              <ThumbFrame $on={n === 3}><Slide page={n} small /></ThumbFrame>
            </ThumbRow>
          ))}
        </SlidePane>
        <Editor><Slide page={3} /></Editor>
        <ScrollBar>
          <ScrollArrow aria-label="上一张"><svg width="8" height="5"><path d="M0 4.500h7L3.500 1z" /></svg></ScrollArrow>
          <ScrollTrack />
          <ScrollThumb />
          <ScrollArrow aria-label="下一张"><svg width="8" height="5"><path d="M0 .500h7L3.500 4z" /></svg></ScrollArrow>
        </ScrollBar>
        <FormatPane>
          <PaneTitle>设置形状格式</PaneTitle>
          <PaneTab>形状选项</PaneTab>
          <PaneTool aria-label="填充与线条">
            <svg width="14" height="14" fill="#fff" stroke="#d04a2b" strokeWidth="1.500"><path d="M7 2l5 5-5 5-5-5z" /></svg>
          </PaneTool>
          <PaneSection><Chevron /></PaneSection>
        </FormatPane>
      </Workspace>
      <Annotations />
    </Page>
  );
}
